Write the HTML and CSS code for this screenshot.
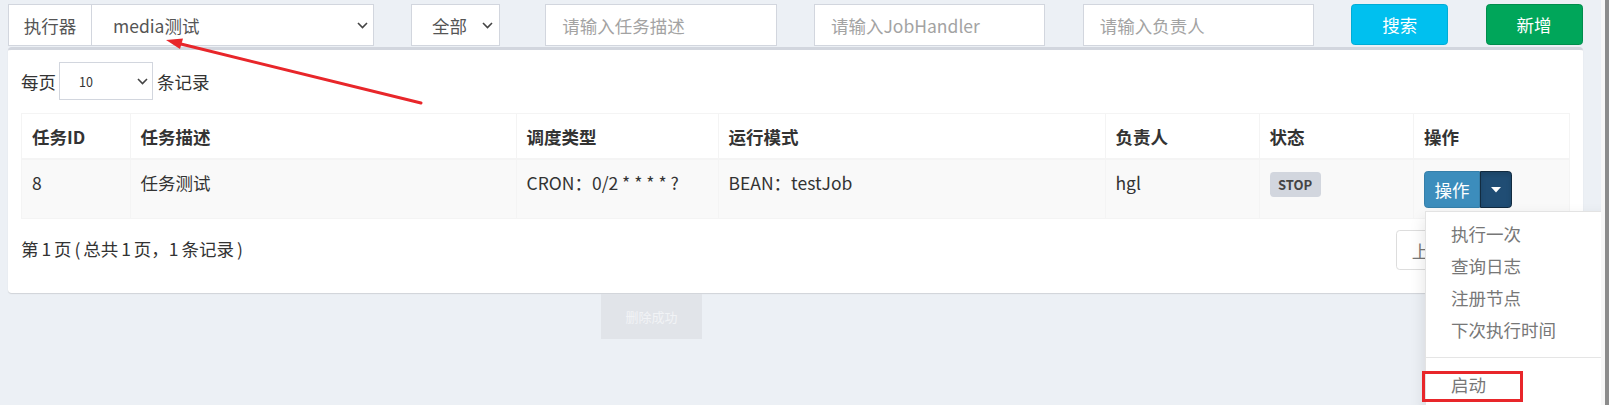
FILE: index.html
```html
<!DOCTYPE html>
<html lang="zh-CN">
<head>
<meta charset="utf-8">
<title>任务管理</title>
<link rel="stylesheet" href="styles.css">
</head>
<body>
<div class="screen">
  <div class="viewport">
    <div class="filters">
      <div class="f-exec">
        <span class="addon">执行器</span>
        <div class="select exec-select">
          <span>media测试</span>
          <svg class="chev" width="11" height="7" viewBox="0 0 11 7"><path d="M1 1 L5.5 5.5 L10 1" fill="none" stroke="#444" stroke-width="1.6"/></svg>
        </div>
      </div>
      <div class="select f-status">
        <span>全部</span>
        <svg class="chev" width="11" height="7" viewBox="0 0 11 7"><path d="M1 1 L5.5 5.5 L10 1" fill="none" stroke="#444" stroke-width="1.6"/></svg>
      </div>
      <div class="input f-input">请输入任务描述</div>
      <div class="input f-input">请输入JobHandler</div>
      <div class="input f-input">请输入负责人</div>
      <div class="btn btn-info f-btn">搜索</div>
      <div class="btn btn-success f-btn">新增</div>
    </div>

    <div class="box">
      <div class="length">
        <span>每页</span>
        <div class="select len-select">
          <span>10</span>
          <svg class="chev" width="11" height="7" viewBox="0 0 11 7"><path d="M1 1 L5.5 5.5 L10 1" fill="none" stroke="#444" stroke-width="1.6"/></svg>
        </div>
        <span>条记录</span>
      </div>

      <table class="grid">
        <colgroup>
          <col class="c-id"><col class="c-desc"><col class="c-sched"><col class="c-mode"><col class="c-owner"><col class="c-status"><col class="c-op">
        </colgroup>
        <thead>
          <tr><th>任务ID</th><th>任务描述</th><th>调度类型</th><th>运行模式</th><th>负责人</th><th>状态</th><th>操作</th></tr>
        </thead>
        <tbody>
          <tr>
            <td>8</td>
            <td>任务测试</td>
            <td>CRON：0/2 * * * * ?</td>
            <td>BEAN：testJob</td>
            <td>hgl</td>
            <td><span class="label">STOP</span></td>
            <td>
              <div class="btn-group">
                <span class="op-main">操作</span>
                <span class="op-caret"><svg width="10" height="6" viewBox="0 0 10 6"><path d="M0 0 H10 L5 5.5 Z" fill="#fff"/></svg></span>
                <ul class="menu">
                  <li>执行一次</li>
                  <li>查询日志</li>
                  <li>注册节点</li>
                  <li>下次执行时间</li>
                  <li class="divider"></li>
                  <li>启动</li>
                </ul>
              </div>
            </td>
          </tr>
        </tbody>
      </table>

      <div class="footer-row">
        <div class="info">第 1 页 ( 总共 1 页，1 条记录 )</div>
        <div class="pager">
          <span class="pg">上页</span><span class="pg active">1</span><span class="pg">下页</span>
        </div>
      </div>
    </div>

    <div class="toast">删除成功</div>
    <svg class="arrow" width="1601" height="405" viewBox="0 0 1601 405">
      <line x1="421" y1="103" x2="181" y2="44" stroke="#e8262a" stroke-width="3" stroke-linecap="round"/>
      <polygon points="166,40 183,38.4 180,49" fill="#e8262a"/>
    </svg>
    <div class="highlight"></div>
  </div>
  <div class="edge-white"></div>
  <div class="edge-dark"></div>
</div>
</body>
</html>
```
FILE: styles.css
```css
* { box-sizing: border-box; }
html, body { margin: 0; padding: 0; }
body {
  font-family: "Noto Sans CJK SC", "Source Sans Pro", "Liberation Sans", sans-serif;
  font-size: 17.5px;
  color: #333;
  background: #ecf0f5;
}
.screen { display: flex; width: 1609px; height: 405px; overflow: hidden; }
.viewport {
  position: relative;
  width: 1601px;
  height: 405px;
  overflow: hidden;
  background: #ecf0f5;
}
.edge-white { width: 4px; background: #f7f7f7; }
.edge-dark { width: 4px; background: #8c8c8c; }

/* filters */
.filters {
  display: grid;
  grid-template-columns: repeat(12, 1fr);
  column-gap: 37.5px;
  padding: 4px 18.5px 0 8px;
}
.f-exec { grid-column: span 3; display: flex; height: 42px; }
.f-status { grid-column: span 1; justify-self: start; width: 89px; padding-left: 20px; padding-right: 6px; }
.f-input { grid-column: span 2; }
.f-btn { grid-column: span 1; }

.addon {
  width: 84px;
  height: 42px;
  border: 1px solid #d2d6de;
  background: #fff;
  color: #555;
  display: flex;
  align-items: center;
  justify-content: center;
}
.select {
  height: 42px;
  border: 1px solid #d2d6de;
  background: #fff;
  color: #555;
  display: flex;
  align-items: center;
  justify-content: space-between;
}
.exec-select { flex: 1; border-left: none; padding-left: 21px; padding-right: 5px; }
.chev { display: block; flex: none; }
.input {
  height: 42px;
  border: 1px solid #d2d6de;
  background: #fff;
  color: #a3a3a3;
  padding-left: 16px;
  display: flex;
  align-items: center;
}
.btn {
  height: 41px;
  border-radius: 3.75px;
  color: #fff;
  display: flex;
  align-items: center;
  justify-content: center;
}
.btn-info { background: #00c0ef; border: 1px solid #00acd6; }
.btn-success { background: #00a65a; border: 1px solid #008d4c; }

/* box */
.box {
  margin: 1px 18.5px 0 8px;
  background: #fff;
  border-top: 3px solid #d2d6de;
  border-radius: 3.75px;
  box-shadow: 0 1px 1px rgba(0, 0, 0, 0.12);
  padding: 12px 13px 23px 13px;
}
.length { display: flex; align-items: center; height: 38px; }
.len-select {
  width: 94px;
  height: 38px;
  margin: 0 4px 0 3px;
  padding-left: 19px;
  padding-right: 4px;
  font-size: 12.5px;
  color: #333;
}

.grid {
  width: 100%;
  margin-top: 13px;
  border-collapse: collapse;
  table-layout: fixed;
  border: 1px solid #f4f4f4;
}
.c-id { width: 108.5px; }
.c-desc { width: 386px; }
.c-sched { width: 202px; }
.c-mode { width: 387px; }
.c-owner { width: 154px; }
.c-status { width: 154.5px; }
.c-op { width: 156px; }
.grid th {
  text-align: left;
  font-weight: 700;
  padding: 10px 10px 9px;
  line-height: 25px;
  border: 1px solid #f4f4f4;
  border-bottom-width: 2px;
  background: #fff;
}
.grid td {
  padding: 10px;
  line-height: 25px;
  vertical-align: top;
  border: 1px solid #f4f4f4;
  background: #f9f9f9;
  white-space: nowrap;
}
.label {
  display: inline-block;
  vertical-align: top;
  margin-top: 2px;
  height: 25px;
  line-height: 25px;
  padding: 0 8.5px;
  font-size: 13px;
  font-weight: 700;
  color: #444;
  background: #d2d6de;
  border-radius: 3.75px;
}
.btn-group {
  position: relative;
  display: flex;
  width: 88px;
  height: 37px;
  margin-top: 1px;
}
.op-main {
  width: 56px;
  background: #3c8dbc;
  border: 1px solid #367fa9;
  border-radius: 3.75px 0 0 3.75px;
  color: #fff;
  display: flex;
  align-items: center;
  justify-content: center;
}
.op-caret {
  width: 32px;
  background: #204d74;
  border: 1px solid #122b40;
  border-radius: 0 3.75px 3.75px 0;
  box-shadow: inset 0 3px 5px rgba(0, 0, 0, 0.125);
  display: flex;
  align-items: center;
  justify-content: center;
}
.menu {
  position: absolute;
  top: 40px;
  left: 1px;
  z-index: 5;
  min-width: 200px;
  margin: 0;
  padding: 6px 0;
  list-style: none;
  background: #fff;
  border: 1px solid #e3e3e3;
  box-shadow: 0 7px 15px rgba(0, 0, 0, 0.12);
}
.menu li {
  padding: 3.75px 25px;
  line-height: 24.5px;
  color: #777;
}
.menu li.divider {
  height: 1px;
  padding: 0;
  margin: 11px 0;
  background: #e5e5e5;
}

.footer-row {
  display: flex;
  justify-content: space-between;
  align-items: flex-start;
  margin-top: 11px;
}
.info { padding-top: 5.5px; line-height: 25px; word-spacing: -1px; }
.pager { display: flex; }
.pg {
  height: 40px;
  padding: 0 15px;
  border: 1px solid #ddd;
  margin-left: -1px;
  color: #777;
  display: flex;
  align-items: center;
}
.pg:first-child { border-radius: 3.75px 0 0 3.75px; }
.pg:last-child { border-radius: 0 3.75px 3.75px 0; }
.pg.active { background: #3c8dbc; border-color: #367fa9; color: #fff; }

/* overlays */
.toast {
  position: absolute;
  left: 601px;
  top: 294px;
  width: 101px;
  height: 45px;
  background: #e1e4e9;
  color: #f1f3f6;
  font-size: 13px;
  display: flex;
  align-items: center;
  justify-content: center;
}
.arrow { position: absolute; left: 0; top: 0; pointer-events: none; z-index: 8; }
.highlight {
  position: absolute;
  left: 1422px;
  top: 371px;
  width: 101px;
  height: 31px;
  border: 3px solid #e8262a;
  z-index: 9;
}
```
